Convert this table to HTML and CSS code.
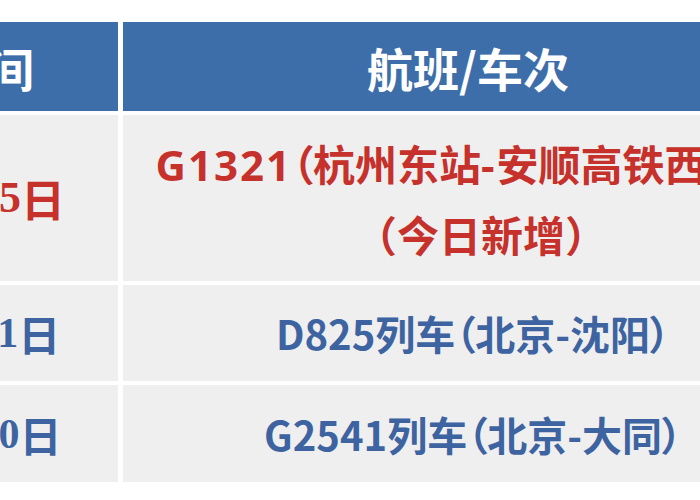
FILE: index.html
```html
<!DOCTYPE html>
<html lang="zh-CN">
<head>
<meta charset="utf-8">
<title>航班/车次</title>
<link rel="stylesheet" href="styles.css">
</head>
<body>
<div class="table">
  <div class="cell head">时间</div>
  <div class="cell head trip-head">航班/车次</div>

  <div class="cell date red big"><span class="num">1</span>月<span class="num">15</span>日</div>
  <div class="cell trip red tall">
    <p class="line"><span class="code">G1321</span><span class="pp">（</span>杭州东站<span class="code">-</span>安顺高铁西站）</p>
    <p class="line second">（今日新增）</p>
  </div>

  <div class="cell date blue"><span class="num">1</span>月<span class="num">11</span>日</div>
  <div class="cell trip blue"><p class="line">D825列车<span class="pp">（</span>北京-沈阳<span class="pp">）</span></p></div>

  <div class="cell date blue"><span class="num">1</span>月<span class="num">10</span>日</div>
  <div class="cell trip blue"><p class="line">G2541列车<span class="pp">（</span>北京-大同<span class="pp">）</span></p></div>
</div>
</body>
</html>
```
FILE: styles.css
```css
html, body {
  margin: 0;
  padding: 0;
  background: #ffffff;
  width: 700px;
  height: 500px;
  overflow: hidden;
}

.table {
  display: grid;
  grid-template-columns: 260px 700px;
  grid-template-rows: 89px 166px 96px 97px;
  column-gap: 5px;
  row-gap: 4px;
  margin: 22px 0 0 -142px;
  width: max-content;
  font-family: "Noto Sans CJK SC", sans-serif;
  font-weight: 700;
}

.cell {
  display: flex;
  flex-direction: column;
  align-items: center;
  justify-content: center;
  background: #efeff0;
  white-space: nowrap;
  font-size: 40px;
  line-height: 1;
}

.head {
  background: #3e6ea9;
  color: #ffffff;
  font-size: 46px;
}

.trip-head {
  padding-right: 10px;
}

.date {
  flex-direction: row;
  font-size: 42px;
}

.date.big {
  font-size: 44px;
}

.num {
  font-family: "Liberation Serif", serif;
  font-weight: 700;
}

.trip.tall {
  font-size: 42px;
}

.line {
  margin: 0;
  line-height: 1;
}

.tall .line {
  line-height: 69px;
}

.line.second {
  padding-left: 16px;
}

.code {
  font-family: "Open Sans", sans-serif;
  font-weight: 700;
  letter-spacing: 2px;
}

.pp {
  font-feature-settings: "palt";
}

.red {
  color: #c6312b;
}

.blue {
  color: #3d64a0;
}
```
